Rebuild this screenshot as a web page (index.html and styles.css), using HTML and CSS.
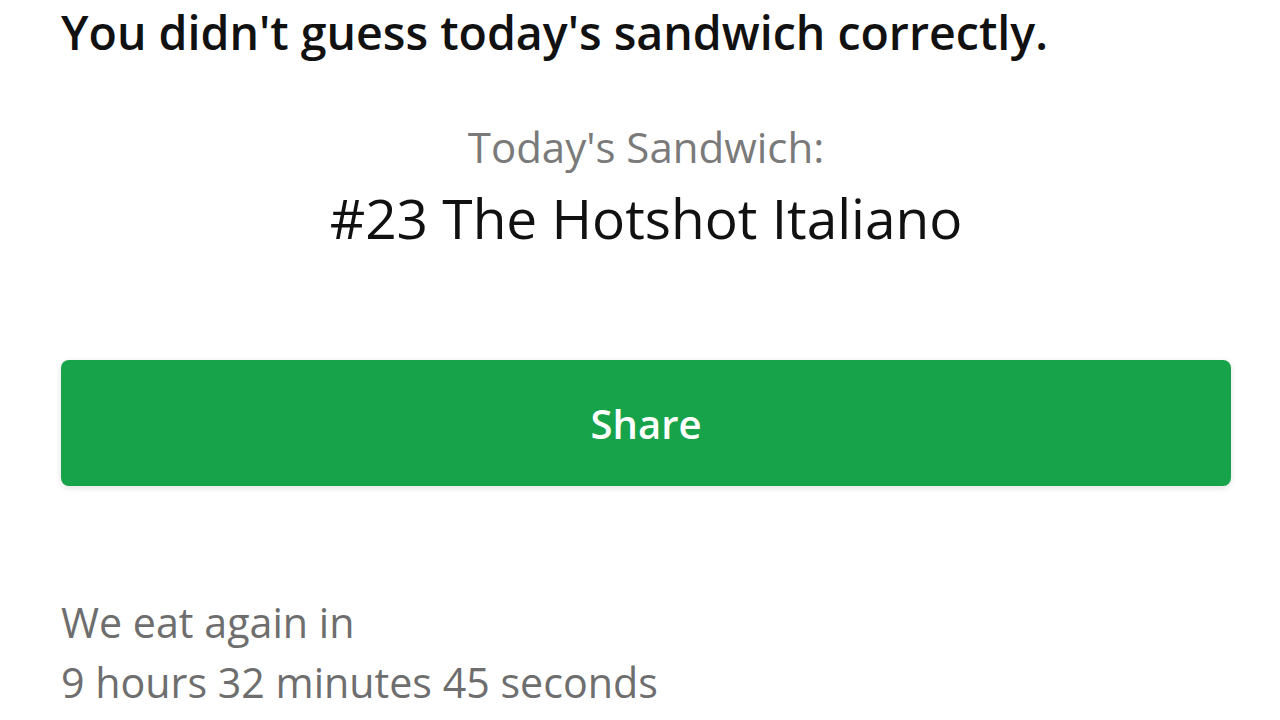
FILE: index.html
```html
<!DOCTYPE html>
<html lang="en">
<head>
  <meta charset="UTF-8" />
  <meta name="viewport" content="width=device-width, initial-scale=1.0"/>
  <title>Sandwich Result</title>
  <link rel="stylesheet" href="styles.css">
</head>
<body>
  <div class="container">
    <h2 class="result-title">You didn't guess today's sandwich correctly.</h2>

    <div class="answer">
      <div class="answer-label">Today's Sandwich:</div>
      <div class="answer-name">#23 The Hotshot Italiano</div>
    </div>

    <button class="share-btn">Share</button>

    <div class="countdown">
      <div>We eat again in</div>
      <div>9 hours 32 minutes 45 seconds</div>
    </div>
  </div>
</body>
</html>
```

FILE: styles.css
```css
body {
  margin: 0;
  font-family: "Open Sans", "Noto Sans", sans-serif;
  background: white;
  color: #111;
}

.container {
  padding: 0 49px 0 61px;
}

.result-title {
  margin: 0;
  font-size: 46.5px;
  line-height: 64px;
  font-weight: 600;
  color: #111;
}

.answer {
  margin-top: 55px;
  text-align: center;
}

.answer-label {
  font-size: 42px;
  line-height: 56px;
  color: #7a7a7a;
}

.answer-name {
  margin-top: 7px;
  font-size: 55px;
  line-height: 72px;
  color: #111;
}

.share-btn {
  display: block;
  width: 100%;
  height: 126px;
  margin-top: 106px;
  background-color: #17a34a;
  color: white;
  border: none;
  border-radius: 8px;
  box-shadow: 0 2px 6px rgba(0,0,0,0.12);
  font-family: inherit;
  font-size: 40px;
  font-weight: 600;
  cursor: pointer;
}

.countdown {
  margin-top: 106px;
  font-size: 41.2px;
  line-height: 60px;
  color: #6e6e6e;
}
```
